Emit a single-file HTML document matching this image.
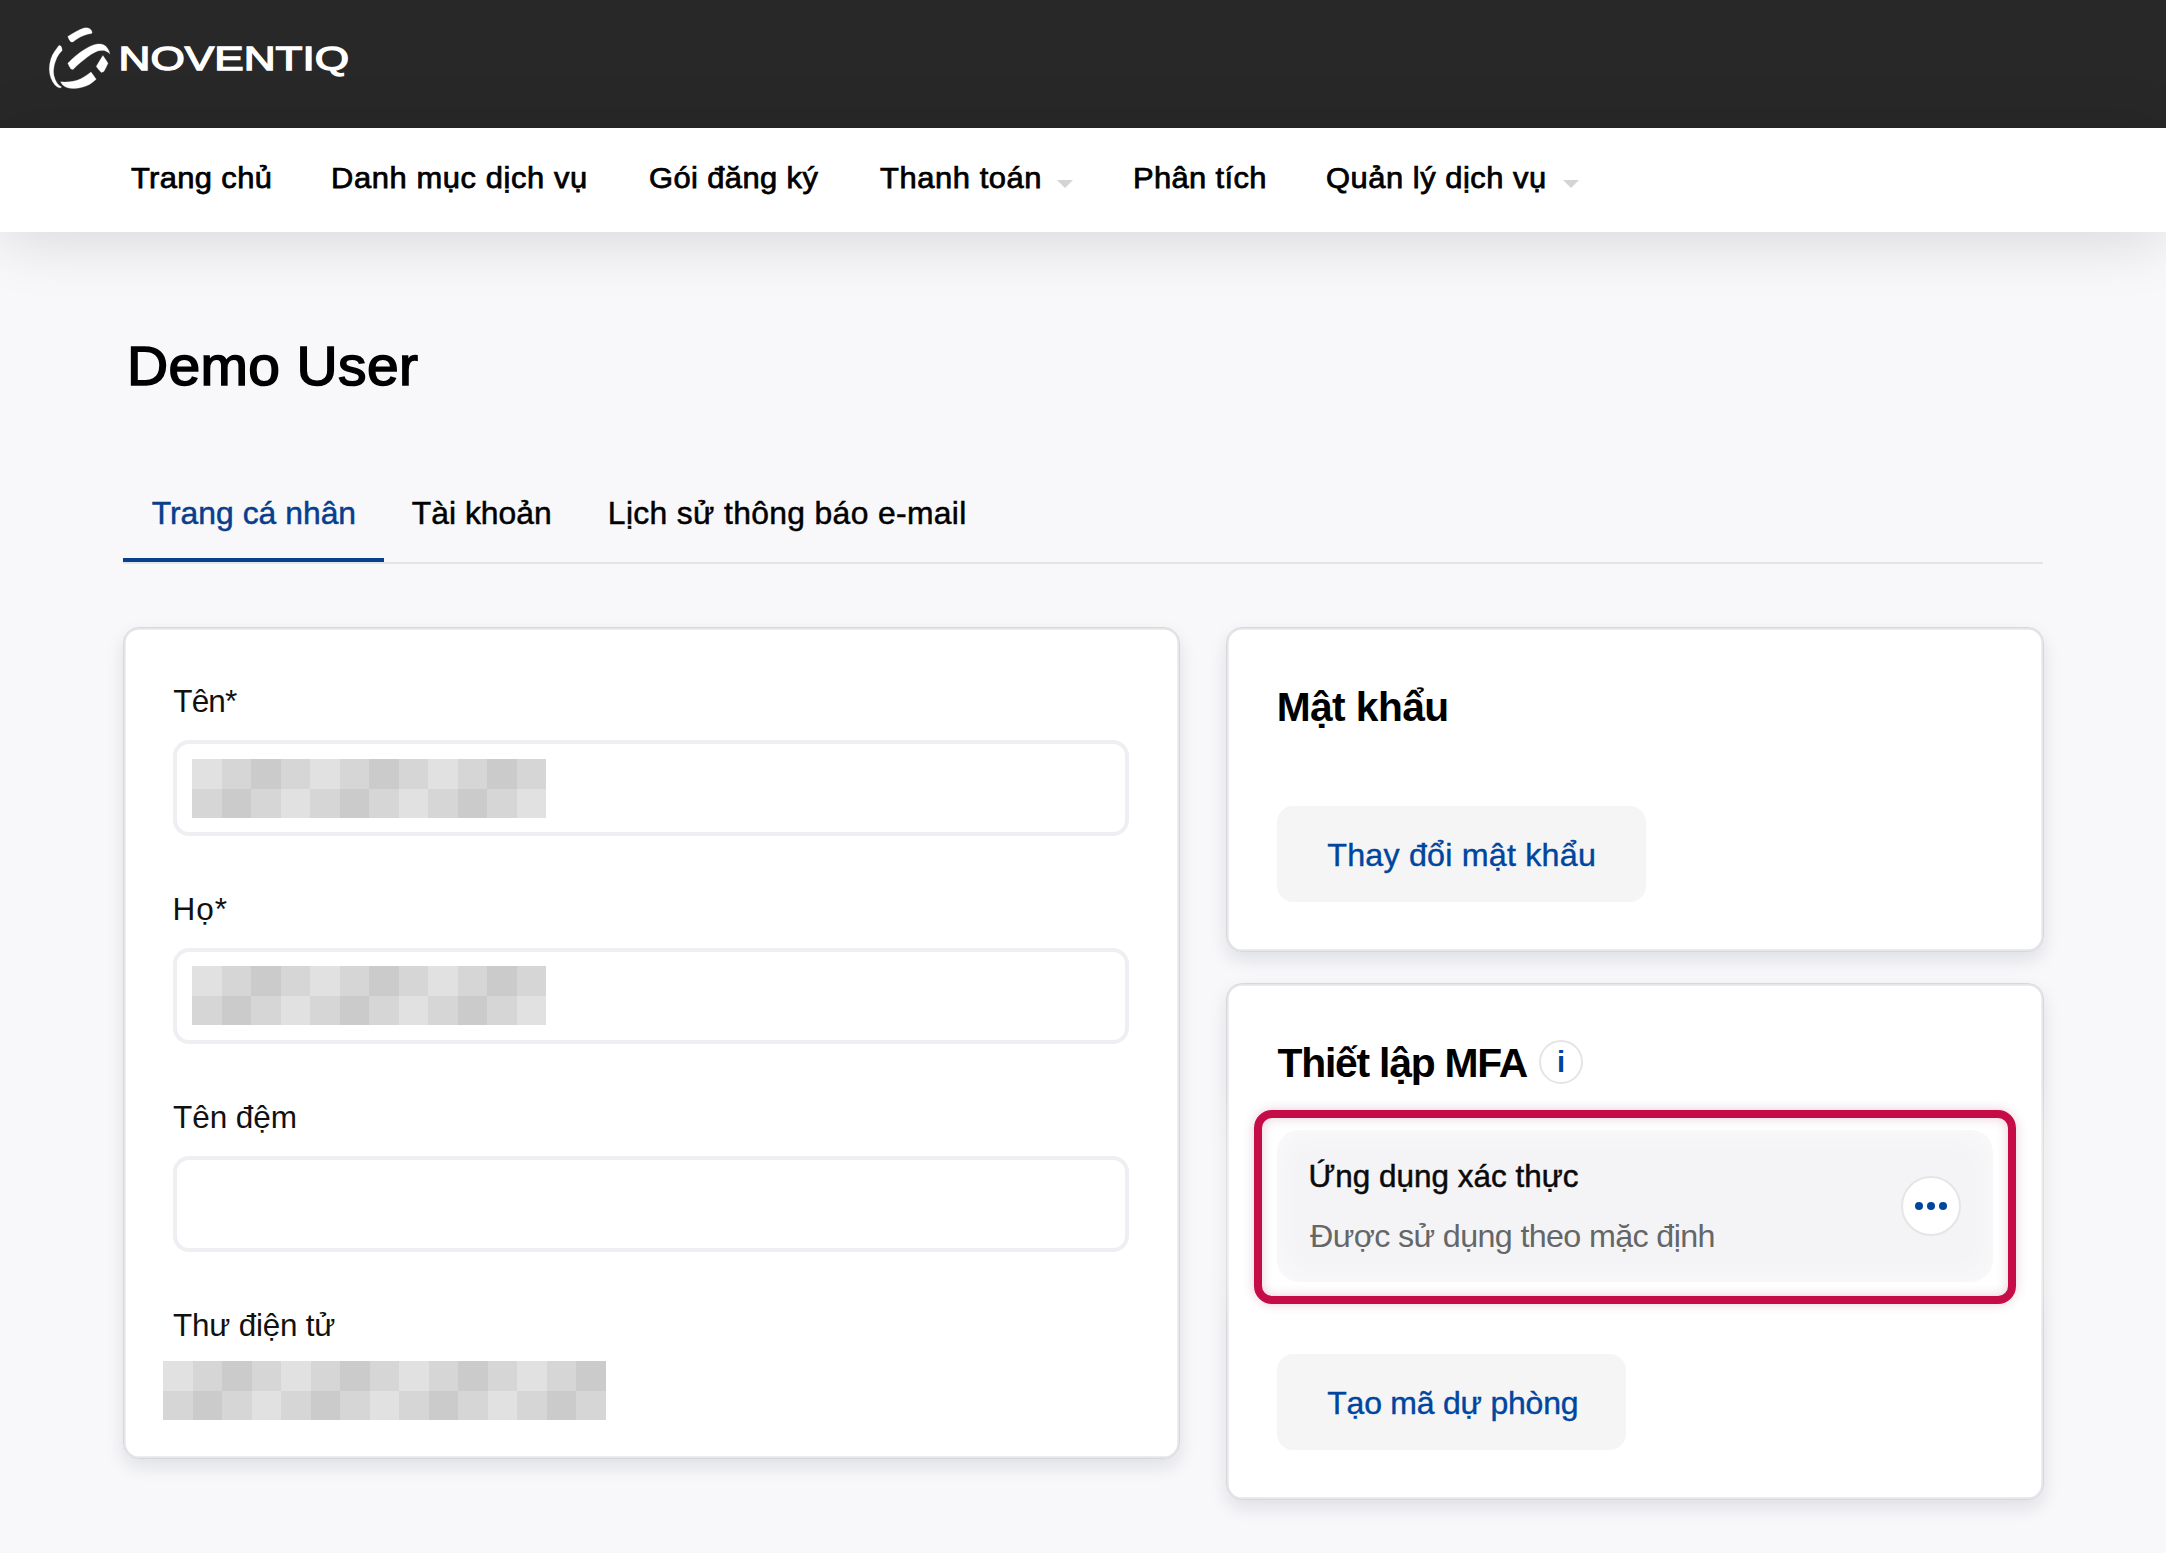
<!DOCTYPE html>
<html lang="vi">
<head>
<meta charset="utf-8">
<title>Demo User</title>
<style>
*{box-sizing:border-box;margin:0;padding:0}
html,body{width:2166px;height:1553px;overflow:hidden}
body{background:#f8f8fa;font-family:"Liberation Sans",sans-serif;color:#000;position:relative}
#header{position:absolute;left:0;top:0;width:2166px;height:128px;background:#282828}
#nav{position:absolute;left:0;top:128px;width:2166px;height:104px;background:#fff;box-shadow:0 6px 64px rgba(0,0,0,.14)}
.caret{position:absolute;width:0;height:0;border-left:8px solid transparent;border-right:8px solid transparent;border-top:8px solid #d4d4d4}
#tabline{position:absolute;left:123px;top:562px;width:1920px;height:2px;background:#e4e4e6}
#tabactive{position:absolute;left:123px;top:558px;width:261px;height:4px;background:#08408e}
.card{position:absolute;background:#fff;border:1px solid #d7d8dc;border-radius:16px;box-shadow:inset 0 0 0 1.7px #e6e6e8,0 8px 18px rgba(10,20,50,.10)}
.input{position:absolute;left:173px;width:956px;height:96px;border:4px solid #eeeff3;border-radius:16px;background:#fff}
.px{position:absolute;display:grid;grid-auto-flow:column;grid-template-rows:29.5px 29.5px;grid-auto-columns:29.5px}
.px i{display:block}
.a{background:#e1e1e1}.b{background:#d6d6d6}.c{background:#cbcbcb}
.btn{position:absolute;left:1277px;height:96px;border-radius:16px;background:#f5f5f5}

#hl{position:absolute;left:1254px;top:1110px;width:762px;height:194px;border:8px solid #c50c46;border-radius:18px;box-shadow:0 0 12px rgba(150,20,65,.20),0 0 40px 14px rgba(255,255,255,.9),inset 0 0 12px rgba(150,20,65,.20),inset 0 0 36px 10px rgba(255,255,255,.8)}
#mfa{position:absolute;left:1277px;top:1130px;width:716px;height:152px;border-radius:22px;background:#f4f4f6}
.circ{position:absolute;border-radius:50%;background:#fff;border:2px solid #e5e5e6}
#dots i{position:absolute;width:8.6px;height:8.6px;border-radius:50%;background:#00459e;top:1201.6px}
#info-i{position:absolute;left:1539px;top:1040px;width:44px;height:44px;text-align:center;font-size:29px;line-height:44px;font-weight:bold;color:#00459e}
.tx{position:absolute;white-space:nowrap}
h1,h2,label,a,span,button{font:inherit;margin:0}
a{text-decoration:none}
svg.logo{position:absolute}
</style>
</head>
<body>
<header id="header">
<svg class="logo" style="left:40px;top:20px" width="340" height="80" viewBox="40 20 340 80">
<g fill="#fff" stroke="#fff" stroke-width=".25" stroke-linejoin="round"><polygon points="67.8,36.4 71.8,33.9 76.1,31.6 80,29.6 83.8,28.1 86.8,27.8 89.5,28.5 91.2,30 92.2,32.4 91.5,33.5 87.5,34.3 83.8,35.5 80.3,37.1 77.1,38.9 74.8,40.6 73,41.9 71.5,42 70.4,41.5 68.8,39"/><polygon points="59.1,45.2 54.9,50.9 52.4,55 50.8,59.2 49.7,64 49.3,68.9 49.7,73.5 50.8,77.7 52.5,81.6 54.9,84.9 57.3,86.9 60.1,88.0 61.6,87 59,85.2 57,82.9 55.2,79.5 53.9,75.6 53.5,72 53.7,68.9 54.3,65 55.5,61.2 57,57.5 59.1,54 62.2,50.4 61.8,48 61.1,46.3"/><polygon points="67.8,63.3 71.8,59.3 76.1,55.5 80.6,52 85.3,48.9 89.7,46.5 94.1,44.7 97.6,44 100.8,44 103.5,44.8 105.9,46.3 107.6,48.4 109,50.9 109.8,54 108.3,52.4 106.5,51.4 104.2,50.6 101.8,50.4 98.6,50.8 95.6,51.9 91.4,54.2 87.4,57.1 83.7,59.9 80.2,62.8 76.5,66.1 73,69.5 70.9,68.9 69.2,66.3"/><polygon points="102.9,55.5 105.5,59.3 108,63.3 106,67.5 103.9,71.5 101.3,72.6 98.6,69.5 96.2,66.4 99.6,60.8"/><polygon points="60.6,81.8 64.7,82.1 68.9,81.8 73,81.3 77.1,80.3 80.8,78.7 84.3,76.7 87.7,74.5 91,72 93.6,75.6 96.2,79.2 93,82 89.5,84.4 85.4,86.2 81.2,87.5 77.3,88.3 73.5,88.5 70,88.3 66.8,87.5 64.3,86.2 62.2,84.4"/></g>
<text x="118.6" y="70.4" font-family="Liberation Sans, sans-serif" font-size="33.6" fill="#fff" stroke="#fff" stroke-width="1.3" textLength="230.5" lengthAdjust="spacingAndGlyphs">NOVENTIQ</text>
</svg>
</header>
<nav>
<div id="nav">
<i class="caret" style="left:1057px;top:52px"></i>
<i class="caret" style="left:1562.6px;top:52px"></i>
</div>
<a id="n1" class="tx" style="left:130.82px;top:162.00px;font-size:28.85px;line-height:32.23px;letter-spacing:0.357px;color:#000;font-weight:normal;-webkit-text-stroke:0.75px #000;transform:scaleX(1.07);transform-origin:0 0;">Trang chủ</a>
<a id="n2" class="tx" style="left:331.26px;top:162.00px;font-size:28.85px;line-height:32.23px;letter-spacing:0.572px;color:#000;font-weight:normal;-webkit-text-stroke:0.75px #000;transform:scaleX(1.07);transform-origin:0 0;">Danh mục dịch vụ</a>
<a id="n3" class="tx" style="left:648.51px;top:162.00px;font-size:28.85px;line-height:32.23px;letter-spacing:0.386px;color:#000;font-weight:normal;-webkit-text-stroke:0.75px #000;transform:scaleX(1.07);transform-origin:0 0;">Gói đăng ký</a>
<a id="n4" class="tx" style="left:879.82px;top:162.00px;font-size:28.85px;line-height:32.23px;letter-spacing:0.558px;color:#000;font-weight:normal;-webkit-text-stroke:0.75px #000;transform:scaleX(1.07);transform-origin:0 0;">Thanh toán</a>
<a id="n5" class="tx" style="left:1133.26px;top:162.00px;font-size:28.85px;line-height:32.23px;letter-spacing:0.349px;color:#000;font-weight:normal;-webkit-text-stroke:0.75px #000;transform:scaleX(1.07);transform-origin:0 0;">Phân tích</a>
<a id="n6" class="tx" style="left:1326.36px;top:162.00px;font-size:28.85px;line-height:32.23px;letter-spacing:0.499px;color:#000;font-weight:normal;-webkit-text-stroke:0.75px #000;transform:scaleX(1.07);transform-origin:0 0;">Quản lý dịch vụ</a>
</nav>
<main>
<h1 id="title" class="tx" style="left:126.50px;top:336.00px;font-size:55.02px;line-height:61.46px;letter-spacing:0.368px;color:#000;font-weight:normal;-webkit-text-stroke:1.6px #000;transform:scaleX(1.035);transform-origin:0 0;">Demo User</h1>
<div class="tabs">
<div id="tabline"></div>
<div id="tabactive"></div>
<a id="t1" class="tx" style="left:151.69px;top:496.00px;font-size:31.83px;line-height:35.56px;letter-spacing:0.025px;color:#083e8c;font-weight:normal;-webkit-text-stroke:0.5px #083e8c;">Trang cá nhân</a>
<a id="t2" class="tx" style="left:411.83px;top:496.00px;font-size:31.83px;line-height:35.56px;letter-spacing:-0.000px;color:#000;font-weight:normal;-webkit-text-stroke:0.5px #000;">Tài khoản</a>
<a id="t3" class="tx" style="left:607.84px;top:496.00px;font-size:31.83px;line-height:35.56px;letter-spacing:0.352px;color:#000;font-weight:normal;-webkit-text-stroke:0.5px #000;">Lịch sử thông báo e-mail</a>
</div>
<section>
<div class="card" id="card1" style="left:123px;top:627px;width:1057px;height:832px"></div>
<label id="l1" class="tx" style="left:173.33px;top:684.00px;font-size:31.54px;line-height:35.24px;letter-spacing:-0.901px;color:#111;font-weight:normal;">Tên*</label>
<div class="input" style="top:740px"></div>
<div class="px" style="left:192px;top:759px"><i class="a"></i><i class="b"></i><i class="b"></i><i class="c"></i><i class="c"></i><i class="b"></i><i class="b"></i><i class="a"></i><i class="a"></i><i class="b"></i><i class="b"></i><i class="c"></i><i class="c"></i><i class="b"></i><i class="b"></i><i class="a"></i><i class="a"></i><i class="b"></i><i class="b"></i><i class="c"></i><i class="c"></i><i class="b"></i><i class="b"></i><i class="a"></i></div>
<label id="l2" class="tx" style="left:172.58px;top:892.00px;font-size:31.54px;line-height:35.24px;letter-spacing:0.910px;color:#111;font-weight:normal;">Họ*</label>
<div class="input" style="top:948px"></div>
<div class="px" style="left:192px;top:966px"><i class="a"></i><i class="b"></i><i class="b"></i><i class="c"></i><i class="c"></i><i class="b"></i><i class="b"></i><i class="a"></i><i class="a"></i><i class="b"></i><i class="b"></i><i class="c"></i><i class="c"></i><i class="b"></i><i class="b"></i><i class="a"></i><i class="a"></i><i class="b"></i><i class="b"></i><i class="c"></i><i class="c"></i><i class="b"></i><i class="b"></i><i class="a"></i></div>
<label id="l3" class="tx" style="left:172.98px;top:1100.00px;font-size:31.54px;line-height:35.24px;letter-spacing:-0.069px;color:#111;font-weight:normal;">Tên đệm</label>
<div class="input" style="top:1156px"></div>
<label id="l4" class="tx" style="left:172.98px;top:1308.00px;font-size:31.40px;line-height:35.08px;letter-spacing:-0.176px;color:#111;font-weight:normal;">Thư điện tử</label>
<div class="px" style="left:163px;top:1361px"><i class="a"></i><i class="b"></i><i class="b"></i><i class="c"></i><i class="c"></i><i class="b"></i><i class="b"></i><i class="a"></i><i class="a"></i><i class="b"></i><i class="b"></i><i class="c"></i><i class="c"></i><i class="b"></i><i class="b"></i><i class="a"></i><i class="a"></i><i class="b"></i><i class="b"></i><i class="c"></i><i class="c"></i><i class="b"></i><i class="b"></i><i class="a"></i><i class="a"></i><i class="b"></i><i class="b"></i><i class="c"></i><i class="c"></i><i class="b"></i></div>
</section>
<section>
<div class="card" id="card2" style="left:1226px;top:627px;width:818px;height:325px"></div>
<h2 id="h1" class="tx" style="left:1276.64px;top:685.00px;font-size:40.70px;line-height:45.47px;letter-spacing:-0.534px;color:#000;font-weight:bold;">Mật khẩu</h2>
<div class="btn" style="top:806px;width:369px"></div>
<span id="b1" class="tx" style="left:1327.25px;top:837.00px;font-size:32.27px;line-height:36.05px;letter-spacing:0.196px;color:#00459e;font-weight:normal;-webkit-text-stroke:0.4px #00459e;">Thay đổi mật khẩu</span>
</section>
<section>
<div class="card" id="card3" style="left:1226px;top:983px;width:818px;height:517px"></div>
<div id="mfa"></div>
<div class="circ" style="left:1901px;top:1176px;width:60px;height:60px"></div>
<div id="hl"></div>
<div id="dots"><i style="left:1914.7px"></i><i style="left:1926.6px"></i><i style="left:1938.6px"></i></div>
<h2 id="h2" class="tx" style="left:1277.54px;top:1041.00px;font-size:40.84px;line-height:45.63px;letter-spacing:-1.223px;color:#000;font-weight:bold;">Thiết lập MFA</h2>
<div class="circ" style="left:1539px;top:1040px;width:44px;height:44px"></div>
<div id="info-i">i</div>
<div id="m1" class="tx" style="left:1308.43px;top:1159.00px;font-size:31.40px;line-height:35.08px;letter-spacing:0.037px;color:#0a0a0a;font-weight:normal;-webkit-text-stroke:0.5px #0a0a0a;">Ứng dụng xác thực</div>
<div id="m2" class="tx" style="left:1310.11px;top:1218.00px;font-size:32.27px;line-height:36.05px;letter-spacing:-0.639px;color:#646668;font-weight:normal;">Được sử dụng theo mặc định</div>
<div class="btn" style="top:1354px;width:349px"></div>
<span id="b2" class="tx" style="left:1327.25px;top:1386.00px;font-size:31.98px;line-height:35.72px;letter-spacing:-0.211px;color:#00459e;font-weight:normal;-webkit-text-stroke:0.4px #00459e;">Tạo mã dự phòng</span>
</section>
</main>
</body>
</html>
